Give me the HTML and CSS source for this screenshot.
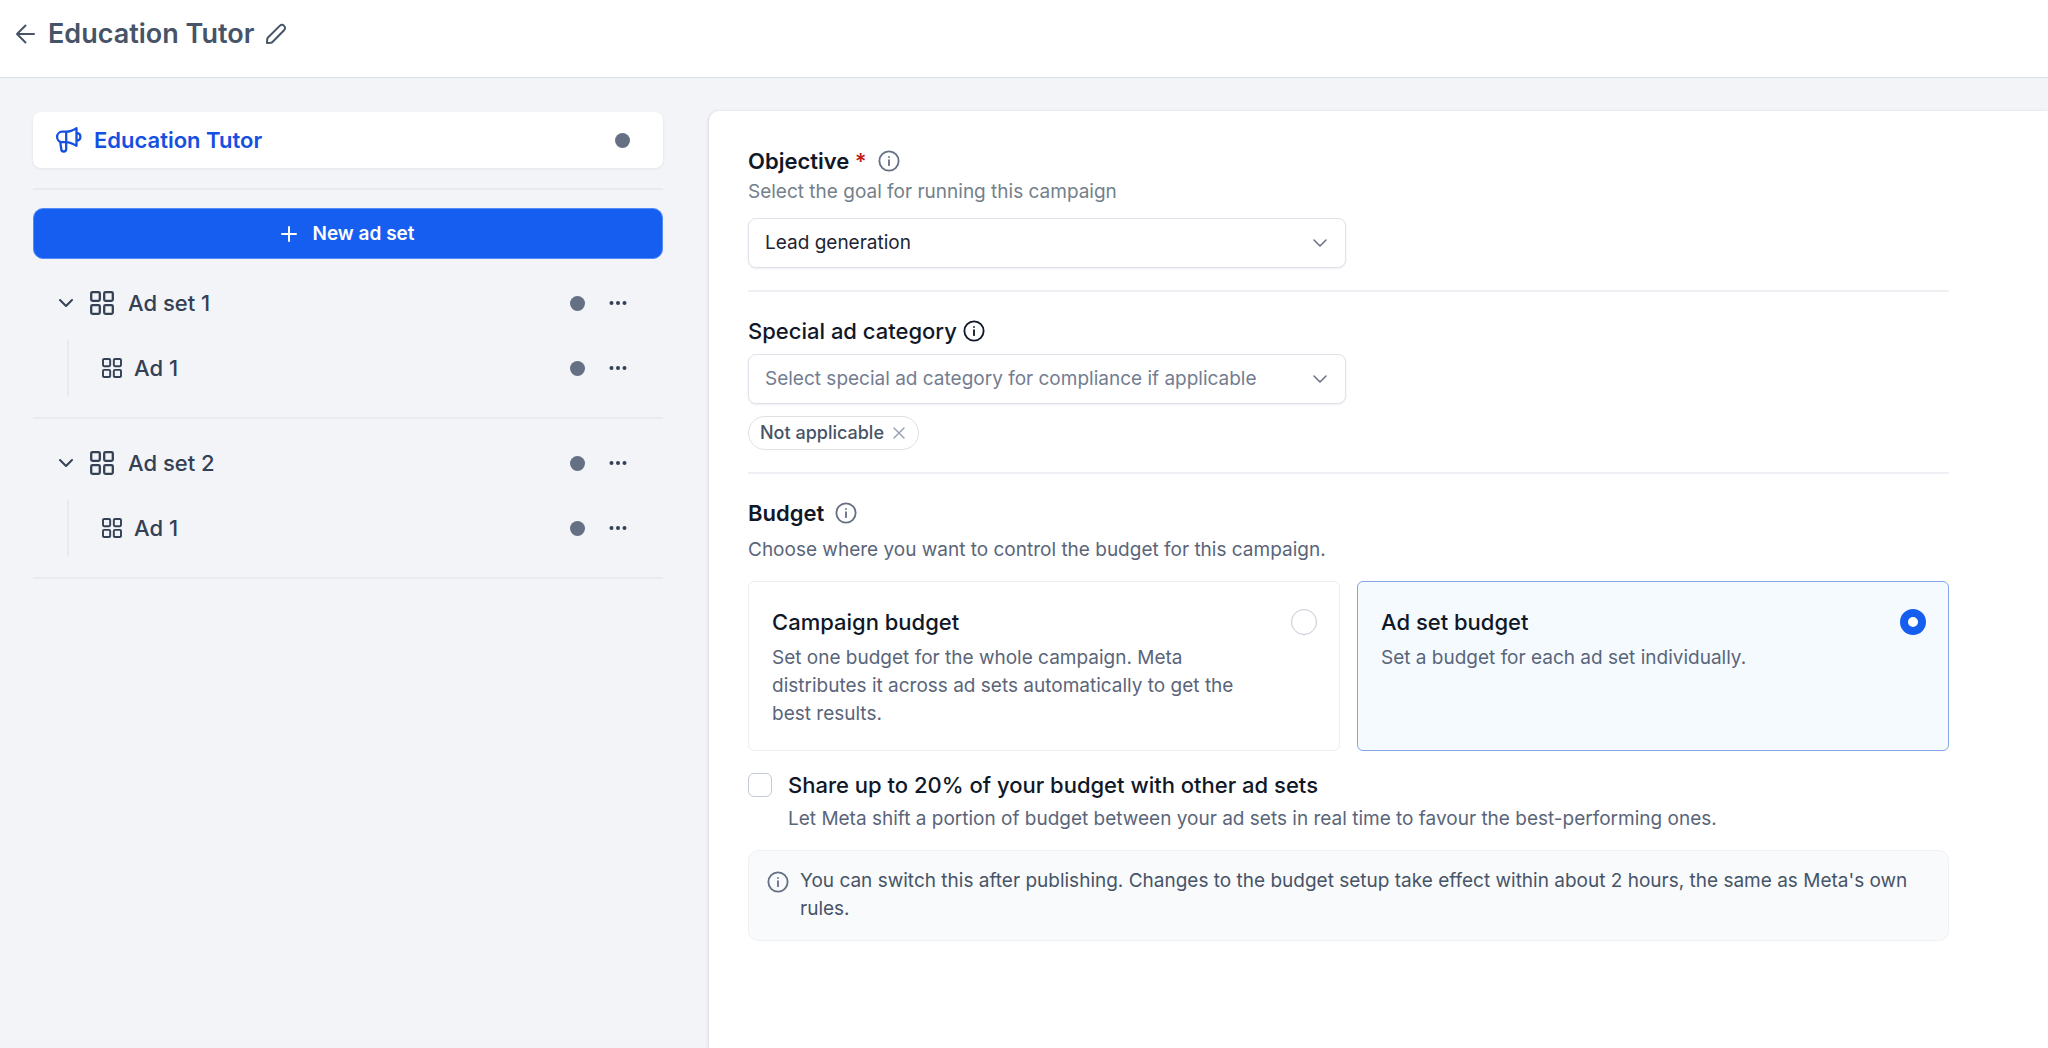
FILE: index.html
```html
<!DOCTYPE html>
<html lang="en">
<head>
<meta charset="utf-8">
<meta name="viewport" content="width=device-width, initial-scale=1">
<title>Education Tutor</title>
<link rel="stylesheet" href="styles.css">
</head>
<body>
<svg class="sprite" aria-hidden="true">
  <symbol id="i-info" viewBox="0 0 24 24"><circle cx="12" cy="12" r="10.500"/><path d="M12 11v5.500M12 7.500v.2"/></symbol>
  <symbol id="i-chevron" viewBox="0 0 16 16"><path d="M2 5l6 6 6-6"/></symbol>
  <symbol id="i-grid" viewBox="0 0 24 24"><rect x="1.200" y="1.200" width="8.600" height="8.600" rx="1.300"/><rect x="14.200" y="1.200" width="8.600" height="8.600" rx="1.300"/><rect x="1.200" y="14.200" width="8.600" height="8.600" rx="1.300"/><rect x="14.200" y="14.200" width="8.600" height="8.600" rx="1.300"/></symbol>
  <symbol id="i-dots" viewBox="0 0 18 18"><circle cx="2.500" cy="9" r="2"/><circle cx="9" cy="9" r="2"/><circle cx="15.500" cy="9" r="2"/></symbol>
</svg>

<header class="topbar">
  <a class="back" href="#" aria-label="Back"><svg class="icon icon-20" viewBox="0 0 20 20"><path d="M18 10H1M9.500 1.500L1 10l8.500 8.500"/></svg></a>
  <h1 class="page-title">Education Tutor</h1>
  <button class="icon-button" type="button" aria-label="Rename campaign"><svg class="icon icon-20" viewBox="0 0 20 20"><path d="M1 19l.2-3.800q.1-1 .8-1.700L13.700 1.900a3 3 0 0 1 4.400 4.400L6.500 18q-.7.7-1.700.8z"/></svg></button>
</header>

<div class="layout">
  <nav class="sidebar" aria-label="Campaign structure">
    <a class="campaign" href="#">
      <svg class="icon icon-26 bold" viewBox="0 0 26 26"><path d="M10.200 4.700H6.300a5.200 5.200 0 0 0 0 10.400h3.900M10.200 4.700v10.400M10.200 4.700c4 0 7-1.500 10.300-3.500v17.600c-3.300-2-6.300-3.700-10.300-3.700M4.200 14.700l1.100 7.600a2.400 2.400 0 0 0 2.400 2.200A2.500 2.500 0 0 0 10.200 22v-6.900M20.500 5.800c5.200.5 5.200 7.500 0 8"/></svg>
      <span class="campaign-name">Education Tutor</span>
      <span class="status"></span>
    </a>
    <hr class="rule">
    <button class="new-set" type="button"><svg class="icon icon-16" viewBox="0 0 16 16"><path d="M8 1v14M1 8h14"/></svg>New ad set</button>

    <section class="ad-set">
      <div class="row">
        <button class="icon-button" type="button" aria-label="Collapse Ad set 1"><svg class="icon icon-16"><use href="#i-chevron"/></svg></button>
        <a class="row-link" href="#"><svg class="icon icon-24 bold"><use href="#i-grid"/></svg>Ad set 1</a>
        <span class="status"></span>
        <button class="icon-button more" type="button" aria-label="Ad set 1 options"><svg class="dots"><use href="#i-dots"/></svg></button>
      </div>
      <div class="row child">
        <a class="row-link" href="#"><svg class="icon icon-20 bold"><use href="#i-grid"/></svg>Ad 1</a>
        <span class="status"></span>
        <button class="icon-button more" type="button" aria-label="Ad 1 options"><svg class="dots"><use href="#i-dots"/></svg></button>
      </div>
    </section>
    <section class="ad-set">
      <div class="row">
        <button class="icon-button" type="button" aria-label="Collapse Ad set 2"><svg class="icon icon-16"><use href="#i-chevron"/></svg></button>
        <a class="row-link" href="#"><svg class="icon icon-24 bold"><use href="#i-grid"/></svg>Ad set 2</a>
        <span class="status"></span>
        <button class="icon-button more" type="button" aria-label="Ad set 2 options"><svg class="dots"><use href="#i-dots"/></svg></button>
      </div>
      <div class="row child">
        <a class="row-link" href="#"><svg class="icon icon-20 bold"><use href="#i-grid"/></svg>Ad 1</a>
        <span class="status"></span>
        <button class="icon-button more" type="button" aria-label="Ad 1 options"><svg class="dots"><use href="#i-dots"/></svg></button>
      </div>
    </section>
  </nav>

  <main class="panel">
    <form class="form">
      <section class="section">
        <div class="heading strong">
          <label for="objective">Objective <span class="required">*</span></label>
          <svg class="icon icon-22 info"><use href="#i-info"/></svg>
        </div>
        <p class="text hint">Select the goal for running this campaign</p>
        <div class="select">
          <select id="objective"><option>Lead generation</option></select>
          <svg class="icon icon-16"><use href="#i-chevron"/></svg>
        </div>
      </section>

      <section class="section">
        <div class="heading tight">
          <label for="category">Special ad category</label>
          <svg class="icon icon-22"><use href="#i-info"/></svg>
        </div>
        <div class="select placeholder">
          <select id="category"><option>Select special ad category for compliance if applicable</option></select>
          <svg class="icon icon-16"><use href="#i-chevron"/></svg>
        </div>
        <div class="chip">Not applicable<button class="icon-button" type="button" aria-label="Remove Not applicable"><svg class="icon icon-12" viewBox="0 0 12 12"><path d="M1 1l10 10M11 1L1 11"/></svg></button></div>
      </section>

      <section class="section">
        <div class="heading strong">
          <h2 class="heading-text">Budget</h2>
          <svg class="icon icon-22 info"><use href="#i-info"/></svg>
        </div>
        <p class="text intro">Choose where you want to control the budget for this campaign.</p>
        <div class="options">
          <label class="option">
            <span class="option-body"><span class="option-title">Campaign budget</span><span class="text">Set one budget for the whole campaign. Meta distributes it across ad sets automatically to get the best results.</span></span>
            <input class="radio" type="radio" name="budget">
          </label>
          <label class="option">
            <span class="option-body"><span class="option-title">Ad set budget</span><span class="text">Set a budget for each ad set individually.</span></span>
            <input class="radio" type="radio" name="budget" checked>
          </label>
        </div>
        <label class="share">
          <input class="checkbox" type="checkbox">
          <span class="share-body"><span class="option-title">Share up to 20% of your budget with other ad sets</span><span class="text">Let Meta shift a portion of budget between your ad sets in real time to favour the best-performing ones.</span></span>
        </label>
        <div class="notice">
          <svg class="icon icon-22"><use href="#i-info"/></svg>
          <p class="text">You can switch this after publishing. Changes to the budget setup take effect within about 2 hours, the same as Meta's own rules.</p>
        </div>
      </section>
    </form>
  </main>
</div>
</body>
</html>
```

FILE: styles.css
```css
*, *::before, *::after { box-sizing: border-box; }

body {
  margin: 0;
  min-height: 100vh;
  display: flex;
  flex-direction: column;
  background: #f2f4f8;
  color: #101828;
  font-family: Inter, "Liberation Sans", sans-serif;
  font-size: 19px;
  line-height: 28px;
}

h1, h2, p { margin: 0; }
button, select { font: inherit; }
a { color: inherit; text-decoration: none; }

.sprite { position: absolute; width: 0; height: 0; }

.icon {
  display: block;
  flex: none;
  fill: none;
  stroke: currentColor;
  stroke-width: 2;
  stroke-linecap: round;
  stroke-linejoin: round;
  overflow: visible;
}
.icon-12 { width: 12px; height: 12px; stroke-width: 1.5; }
.icon-16 { width: 16px; height: 16px; }
.icon-20 { width: 20px; height: 20px; }
.icon-22 { width: 22px; height: 22px; }
.icon-24 { width: 24px; height: 24px; }
.icon-26 { width: 26px; height: 26px; }
.bold { stroke-width: 2.3; }

.icon-button {
  display: flex;
  padding: 0;
  border: 0;
  background: none;
  color: inherit;
  cursor: pointer;
}

.topbar {
  display: flex;
  align-items: center;
  gap: 12px;
  padding: 18px 16px 27px;
  background: #fff;
  border-bottom: 1px solid #d9e0e8;
  color: #475467;
}
.page-title { font-size: 27px; line-height: 32px; font-weight: 600; }

.layout {
  flex: 1;
  display: grid;
  grid-template-columns: minmax(0, 709fr) minmax(0, 1339fr);
}

.sidebar { padding: 34px 46px 0 33px; color: #344054; }
.campaign {
  display: flex;
  align-items: center;
  gap: 12px;
  height: 56px;
  padding: 0 33px 0 23px;
  border-radius: 8px;
  background: #fff;
  box-shadow: 0 1px 3px rgba(16, 24, 40, .08);
  color: #1550e0;
}
.campaign-name { flex: 1; font-size: 22px; font-weight: 600; }
.status { flex: none; width: 15px; height: 15px; border-radius: 50%; background: #667085; }
.rule { height: 2px; margin: 20px 0 18px; border: 0; background: #e8eaef; }

.new-set {
  display: flex;
  align-items: center;
  justify-content: center;
  gap: 15px;
  width: 100%;
  height: 51px;
  border: 1px solid #528bff;
  border-radius: 10px;
  background: #155eef;
  color: #fff;
  font-weight: 600;
  cursor: pointer;
}

.ad-set { padding: 12px 0 21px; border-bottom: 2px solid #e8eaef; }
.row {
  display: flex;
  align-items: center;
  height: 64px;
  padding: 0 36px 0 25px;
  gap: 16px;
}
.child { height: 56px; margin: 5px 0 0 34px; padding-left: 33px; border-left: 2px solid #e8eaef; }
.row-link { flex: 1; display: flex; align-items: center; gap: 14px; font-size: 22px; font-weight: 500; }
.child .row-link { gap: 12px; }
.more { margin-left: 8px; }
.dots { width: 18px; height: 18px; fill: currentColor; }

.panel {
  margin-top: 33px;
  padding: 35px 99px 40px 39px;
  border-top-left-radius: 10px;
  background: #fff;
  box-shadow: -1px 0 3px rgba(16, 24, 40, .1);
}
.section + .section { margin-top: 22px; padding-top: 24px; border-top: 2px solid #eff0f3; }

.heading { display: flex; align-items: center; gap: 11px; font-size: 22px; line-height: 30px; font-weight: 500; }
.heading.tight { gap: 6px; }
.strong { font-weight: 600; }
.heading-text { font: inherit; }
.info { color: #667085; }
.required { color: #c01c1c; }

.text { font-size: 19px; line-height: 28px; color: #5a6579; }
.hint { margin: 2px 0 12px; color: #74808a; }
.intro { margin: 8px 0 17px; }

.select { display: grid; align-items: center; max-width: 598px; }
.select > * { grid-area: 1 / 1; }
.select select {
  width: 100%;
  height: 50px;
  padding: 0 48px 0 16px;
  border: 1px solid #dfe3e9;
  border-radius: 8px;
  background: #fff;
  box-shadow: 0 1px 2px rgba(16, 24, 40, .08);
  color: #1d2433;
  appearance: none;
}
.select .icon { justify-self: end; margin-right: 18px; color: #667085; stroke-width: 1.5; pointer-events: none; }
.select.placeholder select { color: #737d90; }
.heading.tight + .select { margin-top: 8px; }

.chip {
  display: flex;
  width: fit-content;
  align-items: center;
  gap: 9px;
  height: 34px;
  margin-top: 12px;
  padding: 0 13px 0 11px;
  border: 1px solid #dfe1e6;
  border-radius: 17px;
  color: #475467;
  font-size: 18px;
  font-weight: 500;
}
.chip .icon { color: #98a2b3; }

.options { display: grid; grid-template-columns: repeat(2, minmax(0, 1fr)); gap: 17px; }
.option {
  display: flex;
  align-items: flex-start;
  justify-content: space-between;
  padding: 25px 22px 22px 23px;
  border: 1px solid #eceef1;
  border-radius: 6px;
  cursor: pointer;
}
.option:has(:checked) { border-color: #84a5ea; background: #f5faff; }
.option-body { display: grid; gap: 7px; max-width: 480px; }
.option-title { font-size: 22px; line-height: 30px; font-weight: 500; }
.radio, .checkbox { flex: none; margin: 0; appearance: none; border: 1px solid #c4cad4; background: #fff; }
.radio { width: 26px; height: 26px; margin-top: 2px; border-radius: 50%; }
.radio:checked { border: 8px solid #155eef; }
.checkbox { width: 24px; height: 24px; margin-top: 3px; border-radius: 6px; }

.share { display: flex; gap: 16px; margin-top: 19px; }
.share-body { display: grid; gap: 5px; }

.notice {
  display: flex;
  gap: 11px;
  margin-top: 17px;
  padding: 16px 18px 17px;
  border: 1px solid #eff1f4;
  border-radius: 10px;
  background: #f8fafc;
  color: #667085;
}
.notice .text { color: #475467; }
.notice .icon { margin-top: 4px; }
```
